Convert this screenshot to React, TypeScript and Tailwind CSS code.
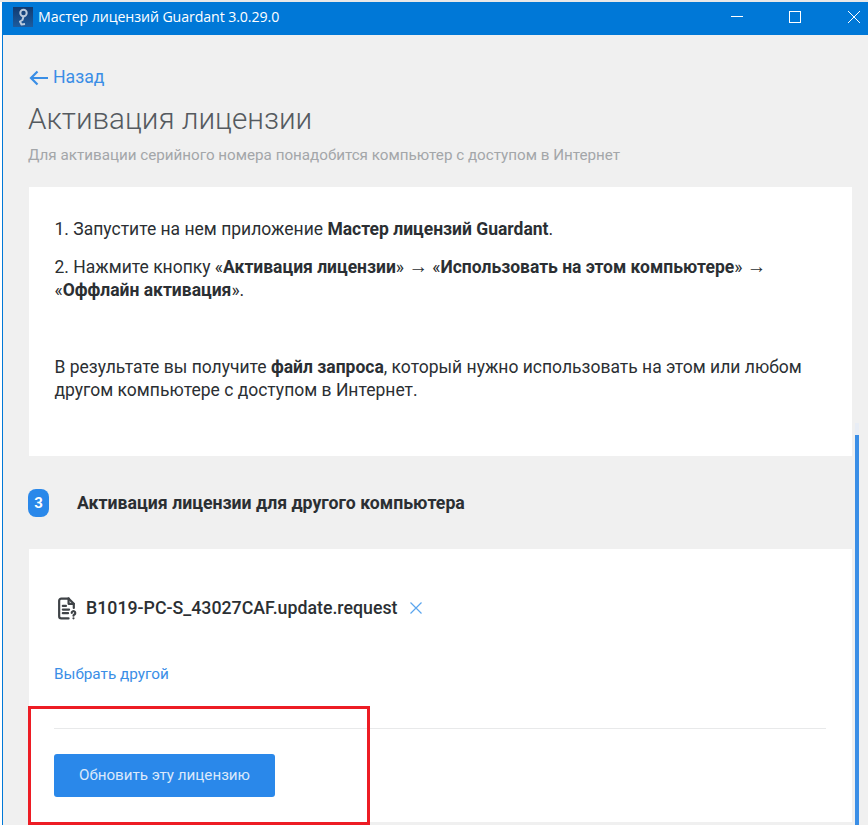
import React from "react";

function FileIcon() {
  return (
    <svg width="20" height="23" viewBox="0 0 19 22" fill="none" stroke="#3f4347" strokeWidth="2.1" strokeLinecap="round" strokeLinejoin="round">
      <path d="M11 1.5H4a2 2 0 0 0-2 2v15a2 2 0 0 0 2 2h7" />
      <path d="M11 1.5l5 5v4" />
      <path d="M11 1.5v5h5" />
      <path d="M5.5 8.5h3M5.5 12h6M5.5 15.5h5" />
      <path d="M14 15.2a1.7 1.7 0 1 1 2.6 1.5c-.6.4-.9.7-.9 1.2" />
      <path d="M15.7 20.3v.1" />
    </svg>
  );
}

function Arrow() {
  return <span className="text-[19.5px] leading-[0] font-['Liberation_Sans',sans-serif]">→</span>;
}

export default function App() {
  return (
    <div className="relative w-[868px] h-[825px] overflow-hidden bg-white font-['Roboto',sans-serif] text-[#2b2f33]">
      <div className="h-[2px] bg-[#e8e8e8]" />
      <div className="ml-[2px] h-[33px] bg-[#0078d7] flex items-center pl-[11px] text-white">
        <div className="w-[20px] h-[20px] bg-gradient-to-b from-[#123a70] to-[#1d5c9e] flex items-center justify-center -mt-[4px]">
          <svg width="12" height="18" viewBox="0 0 12 18" fill="none" stroke="#b9c9dc" strokeWidth="2" strokeLinejoin="round">
            <circle cx="6.5" cy="5" r="3.2" />
            <path d="M6.5 8.5 5.5 12 3 13.5l1.5 3 3.5-.5" />
          </svg>
        </div>
        <span className="ml-[5px] -mt-[4px] text-[14.2px] font-['Open_Sans','Noto_Sans',sans-serif] tracking-[-0.1px]">Мастер лицензий Guardant 3.0.29.0</span>
        <div className="ml-auto flex items-center pr-[8px] gap-[46px] -mt-[4px]">
          <div className="w-[12px] h-px bg-white" />
          <div className="w-[12px] h-[12px] border border-white" />
          <svg className="ml-px" width="12" height="12" viewBox="0 0 12 12" stroke="white" strokeWidth="1"><path d="M0 0l12 12M12 0 0 12" /></svg>
        </div>
      </div>

      <div className="ml-[2px] border-l border-[#0078d7] h-[790px] pl-[26px] relative bg-[#f0f0f0]">
        <div className="pt-[33px] flex items-center h-[53px] gap-[5px] text-[#3a8ee6]">
          <svg width="19" height="16" viewBox="0 0 19 16" fill="none" stroke="#3a8ee6" strokeWidth="2.2">
            <path d="M19 8H2M8.5 1.5 2 8l6.5 6.5" />
          </svg>
          <span className="text-[17.7px] -mt-px">Назад</span>
        </div>
        <h1 className="mt-[13px] -ml-px text-[29.6px] leading-[36px] font-light text-[#555a5f]">Активация лицензии</h1>
        <p className="mt-[8px] -ml-px text-[15.2px] leading-[20px] text-[#a3a6a9]">Для активации серийного номера понадобится компьютер с доступом в Интернет</p>

        <section className="mt-[22px] w-[823px] h-[269px] bg-white pt-[31px] pl-[25.5px] pr-[26px] text-[17.5px] leading-[23px]">
          <p>1. Запустите на нем приложение <b className="font-bold">Мастер лицензий Guardant</b>.</p>
          <p className="mt-[15px]">2. Нажмите кнопку «<b className="font-bold">Активация лицензии</b>» <Arrow /> «<b className="font-bold">Использовать на этом компьютере</b>» <Arrow /> «<b className="font-bold">Оффлайн активация</b>».</p>
          <p className="mt-[54px]">В результате вы получите <b className="font-bold">файл запроса</b>, который нужно использовать на этом или любом другом компьютере с доступом в Интернет.</p>
        </section>

        <div className="h-[93px] flex items-center pt-[1px] -ml-px">
          <div className="w-[21px] h-[28px] rounded-[8px] bg-[#2a88ea] text-white text-[15px] font-bold flex items-center justify-center">3</div>
          <span className="ml-[28px] text-[17.7px] font-bold">Активация лицензии для другого компьютера</span>
        </div>

        <section className="w-[823px] h-[273px] bg-white pl-[25px] pr-[26px]">
          <div className="pt-[48px] flex items-center h-[70px]">
            <div className="ml-[3px]"><FileIcon /></div>
            <span className="ml-[9px] text-[17.75px] font-medium">B1019-PC-S_43027CAF.update.request</span>
            <svg className="ml-[13px]" width="12" height="12" viewBox="0 0 12 12" stroke="#5aa5ee" strokeWidth="1.2"><path d="M.5.5l11 11M11.5.5l-11 11" /></svg>
          </div>
          <div className="mt-[45px] text-[15.3px] leading-[20px] text-[#3a8ee6]">Выбрать другой</div>
          <div className="mt-[44px] h-px bg-[#e8e9ea]" />
          <button className="mt-[25px] w-[221px] h-[43px] rounded-[3px] bg-[#2a88ea] text-[#dbe9fb] text-[15.2px] flex items-center justify-center">Обновить эту лицензию</button>
        </section>
      </div>

      <div className="absolute left-[855px] top-[423px] w-[4px] h-[402px] bg-[#e8edf5]">
        <div className="mt-[12px] w-[4px] h-[390px] bg-[#3a8ee6]" />
      </div>

      <div className="absolute left-[28px] top-[706px] w-[342px] h-[119px] border-[3px] border-[#ed1c24]" />
    </div>
  );
}
